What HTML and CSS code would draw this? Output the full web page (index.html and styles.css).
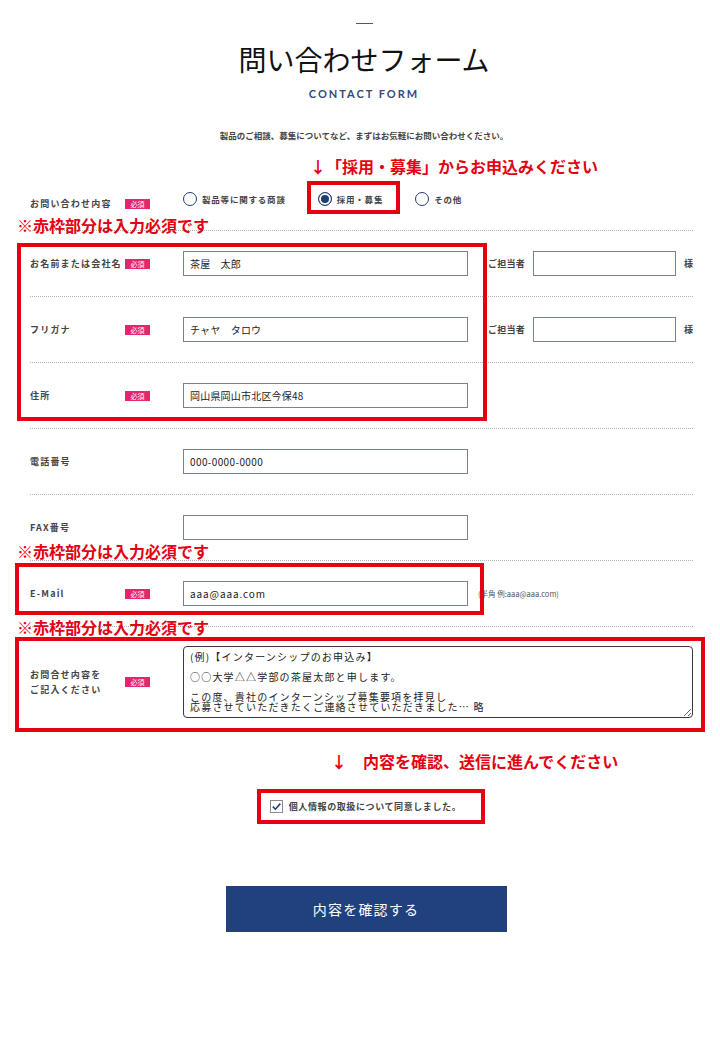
FILE: index.html
```html
<!DOCTYPE html>
<html lang="ja">
<head>
<meta charset="utf-8">
<title>問い合わせフォーム</title>
<link rel="stylesheet" href="styles.css">
</head>
<body>
<div class="page">
  <header class="head">
    <div class="head-bar"></div>
    <h1 class="title">問い合わせフォーム</h1>
    <p class="en">CONTACT FORM</p>
    <p class="lead">製品のご相談、募集についてなど、まずはお気軽にお問い合わせください。</p>
  </header>

  <form class="form">
    <div class="row row-radio">
      <div class="label"><span class="ltxt">お問い合わせ内容</span><span class="req">必須</span></div>
      <div class="radios">
        <label class="radio"><span class="dot"></span>製品等に関する商談</label>
        <label class="radio on"><span class="dot"></span>採用・募集</label>
        <label class="radio"><span class="dot"></span>その他</label>
      </div>
    </div>

    <div class="row">
      <div class="label"><span class="ltxt">お名前または会社名</span><span class="req">必須</span></div>
      <div class="field">茶屋　太郎</div>
      <span class="aside">ご担当者</span>
      <div class="field field-s"></div>
      <span class="sama">様</span>
    </div>

    <div class="row">
      <div class="label"><span class="ltxt">フリガナ</span><span class="req">必須</span></div>
      <div class="field">チャヤ　タロウ</div>
      <span class="aside">ご担当者</span>
      <div class="field field-s"></div>
      <span class="sama">様</span>
    </div>

    <div class="row">
      <div class="label"><span class="ltxt">住所</span><span class="req">必須</span></div>
      <div class="field">岡山県岡山市北区今保48</div>
    </div>

    <div class="row">
      <div class="label"><span class="ltxt">電話番号</span></div>
      <div class="field num">000-0000-0000</div>
    </div>

    <div class="row">
      <div class="label"><span class="ltxt">FAX番号</span></div>
      <div class="field"></div>
    </div>

    <div class="row">
      <div class="label"><span class="ltxt">E-Mail</span><span class="req">必須</span></div>
      <div class="field mail">aaa@aaa.com</div>
      <span class="hint">(半角 例:aaa@aaa.com)</span>
    </div>

    <div class="row row-msg">
      <div class="label"><span class="ltxt">お問合せ内容を<br>ご記入ください</span><span class="req">必須</span></div>
      <textarea class="msg">(例)【インターンシップのお申込み】

○○大学△△学部の茶屋太郎と申します。

この度、貴社のインターンシップ募集要項を拝見し
応募させていただきたくご連絡させていただきました… 略</textarea>
    </div>

    <div class="agree">
      <span class="cbox"><svg viewBox="0 0 13 13" width="13" height="13"><polyline points="2.8,6.6 5.4,9.2 10.3,3.6" fill="none" stroke="#1f3c7a" stroke-width="1.6"/></svg></span>
      <span class="agree-txt">個人情報の取扱について同意しました。</span>
    </div>

    <div class="submit-wrap">
      <button type="button" class="submit">内容を確認する</button>
    </div>
  </form>

  <p class="ann ann-1">↓「採用・募集」からお申込みください</p>
  <div class="rbox rbox-radio"></div>
  <p class="ann req-note req-note-1">※赤枠部分は入力必須です</p>
  <div class="rbox rbox-name"></div>
  <p class="ann req-note req-note-2">※赤枠部分は入力必須です</p>
  <div class="rbox rbox-mail"></div>
  <p class="ann req-note req-note-3">※赤枠部分は入力必須です</p>
  <div class="rbox rbox-msg"></div>
  <p class="ann ann-2">↓　内容を確認、送信に進んでください</p>
  <div class="rbox rbox-agree"></div>
</div>
</body>
</html>
```

FILE: styles.css
```css
* { box-sizing: border-box; }
html, body { margin: 0; padding: 0; background: #fff; }
body {
  font-family: "Noto Sans CJK JP", "Noto Sans", sans-serif;
  color: #333;
}
.page {
  position: relative;
  display: flow-root;
  width: 720px;
  min-height: 1040px;
  padding: 0 22px 0 30px;
}

/* header */
.head { text-align: center; }
.head-bar { width: 17px; height: 1px; background: #3d5a8e; margin: 23px auto 0; }
.title {
  margin: 18px 0 0;
  font-size: 28px;
  line-height: 34px;
  font-weight: 400;
  color: #111;
}
.en {
  margin: 11px 0 0;
  font-family: Lato, "Noto Sans", sans-serif;
  font-size: 11px;
  line-height: 14px;
  letter-spacing: 2px;
  font-weight: 700;
  color: #34497a;
}
.lead {
  margin: 28px 0 0;
  font-size: 8.5px;
  line-height: 12px;
  font-weight: 700;
  color: #444;
}

/* form rows */
.form { margin: 24px 5px 0 0; }
.row {
  display: flex;
  align-items: center;
  height: 66px;
  border-bottom: 1px dotted #b3b3b3;
}
.label { width: 153px; flex: none; display: flex; align-items: center; }
.ltxt {
  width: 95px;
  flex: none;
  font-size: 9px;
  font-weight: 700;
  letter-spacing: 1.2px;
  line-height: 15px;
  color: #444;
  white-space: nowrap;
}
.req {
  width: 25px;
  height: 10px;
  flex: none;
  background: #e5266b;
  color: #fff;
  font-size: 7px;
  line-height: 10px;
  text-align: center;
}
.row-radio .label { margin-top: 12px; }
.radios { display: flex; align-items: center; gap: 32px; margin-top: 3px; }
.radio {
  display: flex;
  align-items: center;
  font-size: 8.5px;
  font-weight: 700;
  letter-spacing: 0.8px;
  color: #444;
  white-space: nowrap;
}
.dot {
  width: 14px;
  height: 14px;
  flex: none;
  border: 1.5px solid #1f3c7a;
  border-radius: 50%;
  margin-right: 5px;
  background: #fff;
}
.on .dot { background: #1f3c7a; box-shadow: inset 0 0 0 2px #fff; }

.field {
  width: 285px;
  height: 25px;
  flex: none;
  border: 1px solid #74829f;
  padding: 0 6px;
  font-size: 10px;
  line-height: 23px;
  letter-spacing: 0.2px;
  color: #222;
  white-space: nowrap;
}
.field.num { letter-spacing: 0.4px; }
.field.mail { letter-spacing: 0.9px; }
.field-s { width: 143px; margin-left: 8px; }
.aside { flex: none; margin-left: 20px; font-size: 9px; font-weight: 700; letter-spacing: 0.25px; color: #444; white-space: nowrap; }
.sama { flex: none; margin-left: 8px; font-size: 9px; font-weight: 700; color: #444; white-space: nowrap; }
.hint { flex: none; margin-left: 10px; font-size: 7.5px; color: #555; white-space: nowrap; }

.row-msg { height: auto; padding: 19px 0; border-bottom: none; }
.msg {
  display: block;
  width: 511px;
  height: 72px;
  border: 1px solid #3a3a3a;
  border-radius: 4px;
  padding: 5px 6px;
  font-family: "Noto Sans CJK JP", sans-serif;
  font-size: 10px;
  line-height: 10px;
  letter-spacing: 1.2px;
  color: #222;
  background: #fff;
  overflow: hidden;
}

/* agree + submit */
.agree {
  display: flex;
  justify-content: center;
  align-items: center;
  height: 20px;
  margin-top: 59px;
  padding-left: 8px;
}
.cbox {
  width: 13px;
  height: 13px;
  flex: none;
  border: 1px solid #8a8a8a;
  margin-right: 6px;
  display: flex;
  align-items: center;
  justify-content: center;
}
.cbox svg { display: block; margin: -1px; }
.agree-txt { font-size: 9px; font-weight: 700; letter-spacing: 0.6px; color: #444; }

.submit-wrap { display: flex; justify-content: center; padding-left: 9px; margin-top: 70px; }
.submit {
  width: 281px;
  height: 46px;
  border: none;
  background: #21417e;
  color: #fff;
  font-family: "Noto Sans CJK JP", sans-serif;
  font-size: 14px;
  letter-spacing: 1.2px;
}

/* red annotations overlaid on the screenshot */
.ann {
  position: absolute;
  margin: 0;
  color: #e50012;
  font-weight: 700;
  font-size: 16px;
  line-height: 20px;
  white-space: nowrap;
}
.ann-1 { left: 310px; top: 156px; }
.ann-2 { left: 331px; top: 751px; }
.req-note { left: 17px; }
.req-note-1 { top: 215px; }
.req-note-2 { top: 541px; }
.req-note-3 { top: 617px; }

.rbox { position: absolute; border: 4px solid #e50012; }
.rbox-radio { left: 307px; top: 181px; width: 93px; height: 33px; }
.rbox-name { left: 17px; top: 243px; width: 470px; height: 178px; }
.rbox-mail { left: 15px; top: 563px; width: 469px; height: 52px; }
.rbox-msg { left: 15px; top: 637px; width: 690px; height: 95px; }
.rbox-agree { left: 257px; top: 789px; width: 228px; height: 35px; }
```
